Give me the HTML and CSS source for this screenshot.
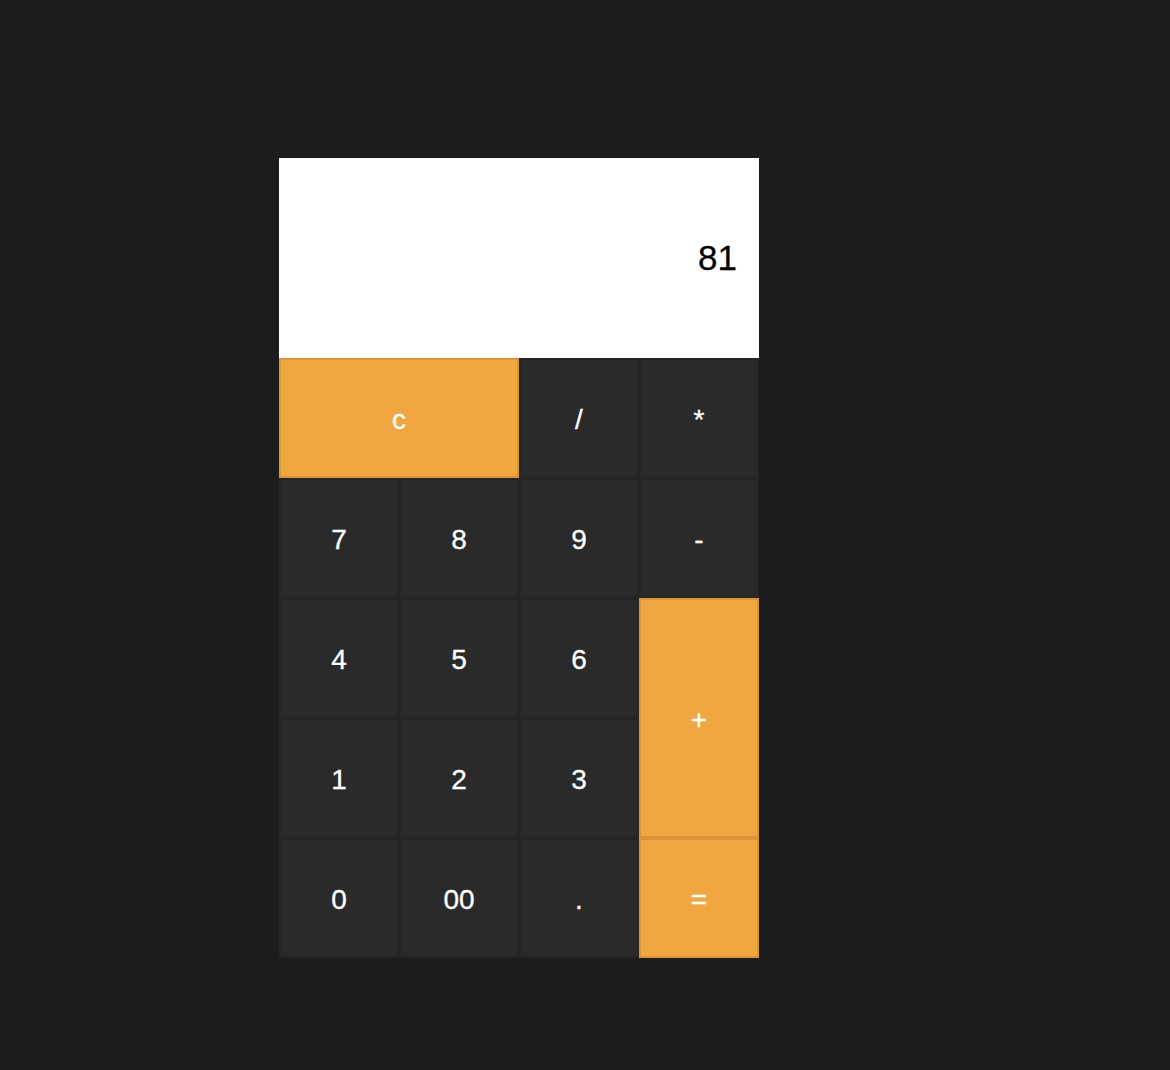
FILE: index.html
```html
<!DOCTYPE html>
<html>
<head>
<meta charset="utf-8">
<link rel="stylesheet" href="styles.css">
</head>
<body>
<div class="page">
  <div class="calc">
    <div class="display">81</div>
    <div class="keys">
      <button class="key op wide">c</button>
      <button class="key">/</button>
      <button class="key">*</button>
      <button class="key">7</button>
      <button class="key">8</button>
      <button class="key">9</button>
      <button class="key">-</button>
      <button class="key">4</button>
      <button class="key">5</button>
      <button class="key">6</button>
      <button class="key op tall">+</button>
      <button class="key">1</button>
      <button class="key">2</button>
      <button class="key">3</button>
      <button class="key">0</button>
      <button class="key">00</button>
      <button class="key">.</button>
      <button class="key op">=</button>
    </div>
  </div>
</div>
</body>
</html>
```
FILE: styles.css
```css
html, body {
  margin: 0;
  padding: 0;
  background: #1c1c1c;
}
.page {
  padding: 158px 0 0 279px;
  min-height: 1070px;
  box-sizing: border-box;
}
.calc {
  width: 480px;
  font-family: "Liberation Sans", Arial, sans-serif;
}
.display {
  height: 200px;
  background: #ffffff;
  color: #000;
  font-size: 35px;
  display: flex;
  align-items: center;
  justify-content: flex-end;
  padding-right: 22px;
  box-sizing: border-box;
  -webkit-text-stroke: 0.3px #000;
}
.keys {
  display: grid;
  grid-template-columns: repeat(4, 120px);
  grid-auto-rows: 120px;
}
.key {
  margin: 0;
  padding: 4px 0 0 0;
  box-sizing: border-box;
  border: 2px solid #252525;
  background: #2a2a2a;
  color: #ffffff;
  font-family: "Liberation Sans", Arial, sans-serif;
  font-size: 28px;
  -webkit-text-stroke: 0.3px #ffffff;
  display: flex;
  align-items: center;
  justify-content: center;
}
.op {
  background: #f0a742;
  border-color: #db9538;
}
.wide {
  grid-column: span 2;
}
.tall {
  grid-row: span 2;
}
```
